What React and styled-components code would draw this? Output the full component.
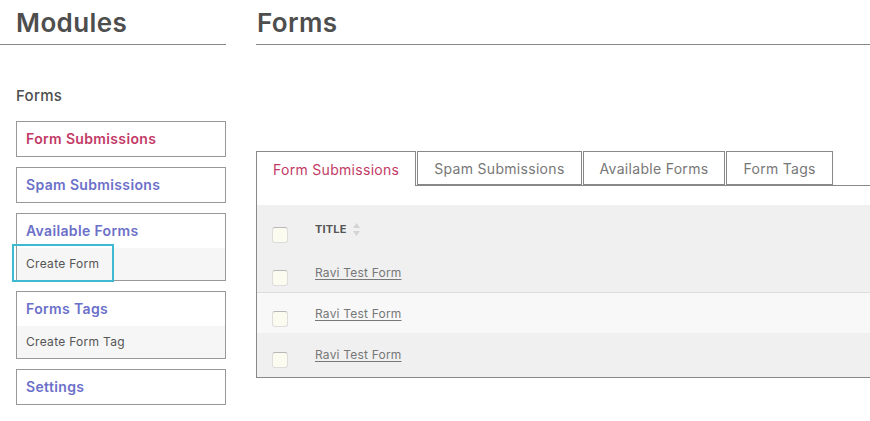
import styled, { createGlobalStyle } from 'styled-components';

const GlobalStyle = createGlobalStyle`
  html, body {
    margin: 0;
    padding: 0;
    background: #ffffff;
    font-family: Inter, "Open Sans", "Liberation Sans", sans-serif;
  }
`;

const Page = styled.div`
  display: grid;
  grid-template-columns: 226px 614px;
  column-gap: 30px;
  width: 870px;
  overflow: hidden;
`;

const Sidebar = styled.aside`
  display: flex;
  flex-direction: column;
`;

const Heading = styled.h1`
  margin: 0;
  height: 44px;
  padding-left: ${(p) => (p.$indent ? '16px' : '1px')};
  border-bottom: 1px solid #888888;
  font-size: 26px;
  font-weight: 600;
  line-height: 46px;
  color: #4e4e4e;
  box-sizing: content-box;
  letter-spacing: 0.4px;
`;

const GroupTitle = styled.h2`
  margin: 39px 0 13px 16px;
  font-size: 15px;
  font-weight: 500;
  line-height: 24px;
  color: #4e4e4e;
  letter-spacing: 0.3px;
`;

const MenuList = styled.div`
  display: flex;
  flex-direction: column;
  gap: 10px;
  margin-left: 16px;
`;

const MenuBox = styled.div`
  border: 1px solid #999999;
  display: flex;
  flex-direction: column;
`;

const MenuTitle = styled.a`
  display: block;
  height: 34px;
  line-height: 34px;
  padding: 0 9px;
  font-size: 14px;
  font-weight: 600;
  letter-spacing: 0.35px;
  color: ${(p) => (p.$active ? '#c23a66' : '#6b70c9')};
  text-decoration: none;
`;

const SubRow = styled.div`
  background: #f6f6f6;
  height: 32px;
`;

const SubLink = styled.a`
  display: inline-block;
  height: 34px;
  line-height: 32px;
  padding: 0 ${(p) => (p.$focused ? '13px' : '9px')} 0 ${(p) => (p.$focused ? '12px' : '9px')};
  margin-left: ${(p) => (p.$focused ? '-3px' : '0')};
  font-size: 12px;
  letter-spacing: 0.3px;
  color: #555555;
  text-decoration: none;
  outline: ${(p) => (p.$focused ? '2px solid #3dbacf' : 'none')};
  position: relative;
  top: ${(p) => (p.$focused ? '-2px' : '0')};
  padding-top: ${(p) => (p.$focused ? '2px' : '0')};
  box-sizing: border-box;
`;

const Main = styled.main`
  display: flex;
  flex-direction: column;
`;

const TabBar = styled.div`
  display: flex;
  gap: 1px;
  margin-top: 106px;
  border-bottom: 1px solid #888888;
  height: 34px;
`;

const Tab = styled.button`
  height: ${(p) => (p.$active ? '35px' : '34px')};
  padding: 0 16px;
  border: 1px solid #888888;
  border-bottom: ${(p) => (p.$active ? 'none' : '1px solid #888888')};
  background: #ffffff;
  font-family: inherit;
  font-size: 14px;
  letter-spacing: 0.3px;
  color: ${(p) => (p.$active ? '#c23a66' : '#777777')};
  box-sizing: border-box;
  cursor: pointer;
`;

const Panel = styled.div`
  border-left: 1px solid #888888;
  border-bottom: 1px solid #888888;
  padding-top: 19px;
`;

const Row = styled.div`
  display: grid;
  grid-template-columns: 58px 1fr;
  height: ${(p) => p.$h}px;
  background: ${(p) => (p.$light ? '#f8f8f8' : '#f0f0f0')};
  border-bottom: ${(p) => (p.$divider ? '1px solid #dcdcdc' : 'none')};
  box-sizing: border-box;
`;

const Cell = styled.div`
  padding-top: ${(p) => p.$top}px;
`;

const CheckBox = styled.span`
  display: block;
  width: 14px;
  height: 14px;
  margin-left: 15px;
  background: #fbfbef;
  border: 1px solid #dddddd;
  border-top-color: #b8b8b8;
  border-radius: 3px;
`;

const HeaderLabel = styled.span`
  display: inline-flex;
  align-items: center;
  gap: 5px;
  font-size: 11px;
  font-weight: 700;
  color: #555555;
  letter-spacing: 0.2px;
`;

const FormLink = styled.a`
  font-size: 12px;
  letter-spacing: 0.2px;
  color: #777777;
  text-decoration: underline;
  text-underline-offset: 2px;
`;

const SortIcon = () => (
  <svg width="9" height="15" viewBox="0 0 9 15">
    <path d="M4.5 1 L8 6 L1 6 Z" fill="#d4d4d4" />
    <path d="M4.5 14 L8 9 L1 9 Z" fill="#d4d4d4" />
  </svg>
);

const rows = ['Ravi Test Form', 'Ravi Test Form', 'Ravi Test Form'];

export default function App() {
  return (
    <>
      <GlobalStyle />
      <Page>
        <Sidebar>
          <Heading $indent>Modules</Heading>
          <GroupTitle>Forms</GroupTitle>
          <MenuList>
            <MenuBox>
              <MenuTitle $active>Form Submissions</MenuTitle>
            </MenuBox>
            <MenuBox>
              <MenuTitle>Spam Submissions</MenuTitle>
            </MenuBox>
            <MenuBox>
              <MenuTitle>Available Forms</MenuTitle>
              <SubRow>
                <SubLink $focused>Create Form</SubLink>
              </SubRow>
            </MenuBox>
            <MenuBox>
              <MenuTitle>Forms Tags</MenuTitle>
              <SubRow>
                <SubLink>Create Form Tag</SubLink>
              </SubRow>
            </MenuBox>
            <MenuBox>
              <MenuTitle>Settings</MenuTitle>
            </MenuBox>
          </MenuList>
        </Sidebar>
        <Main>
          <Heading>Forms</Heading>
          <TabBar>
            <Tab $active>Form Submissions</Tab>
            <Tab>Spam Submissions</Tab>
            <Tab>Available Forms</Tab>
            <Tab>Form Tags</Tab>
          </TabBar>
          <Panel>
            <Row $h={47}>
              <Cell $top={22}>
                <CheckBox />
              </Cell>
              <Cell $top={12}>
                <HeaderLabel>
                  TITLE <SortIcon />
                </HeaderLabel>
              </Cell>
            </Row>
            {rows.map((title, i) => (
              <Row
                key={i}
                $h={i === 0 ? 41 : i === 1 ? 40 : 44}
                $light={i === 1}
                $divider={i === 0}
              >
                <Cell $top={i === 2 ? 19 : 18}>
                  <CheckBox />
                </Cell>
                <Cell $top={i === 2 ? 10 : 9}>
                  <FormLink>{title}</FormLink>
                </Cell>
              </Row>
            ))}
          </Panel>
        </Main>
      </Page>
    </>
  );
}
